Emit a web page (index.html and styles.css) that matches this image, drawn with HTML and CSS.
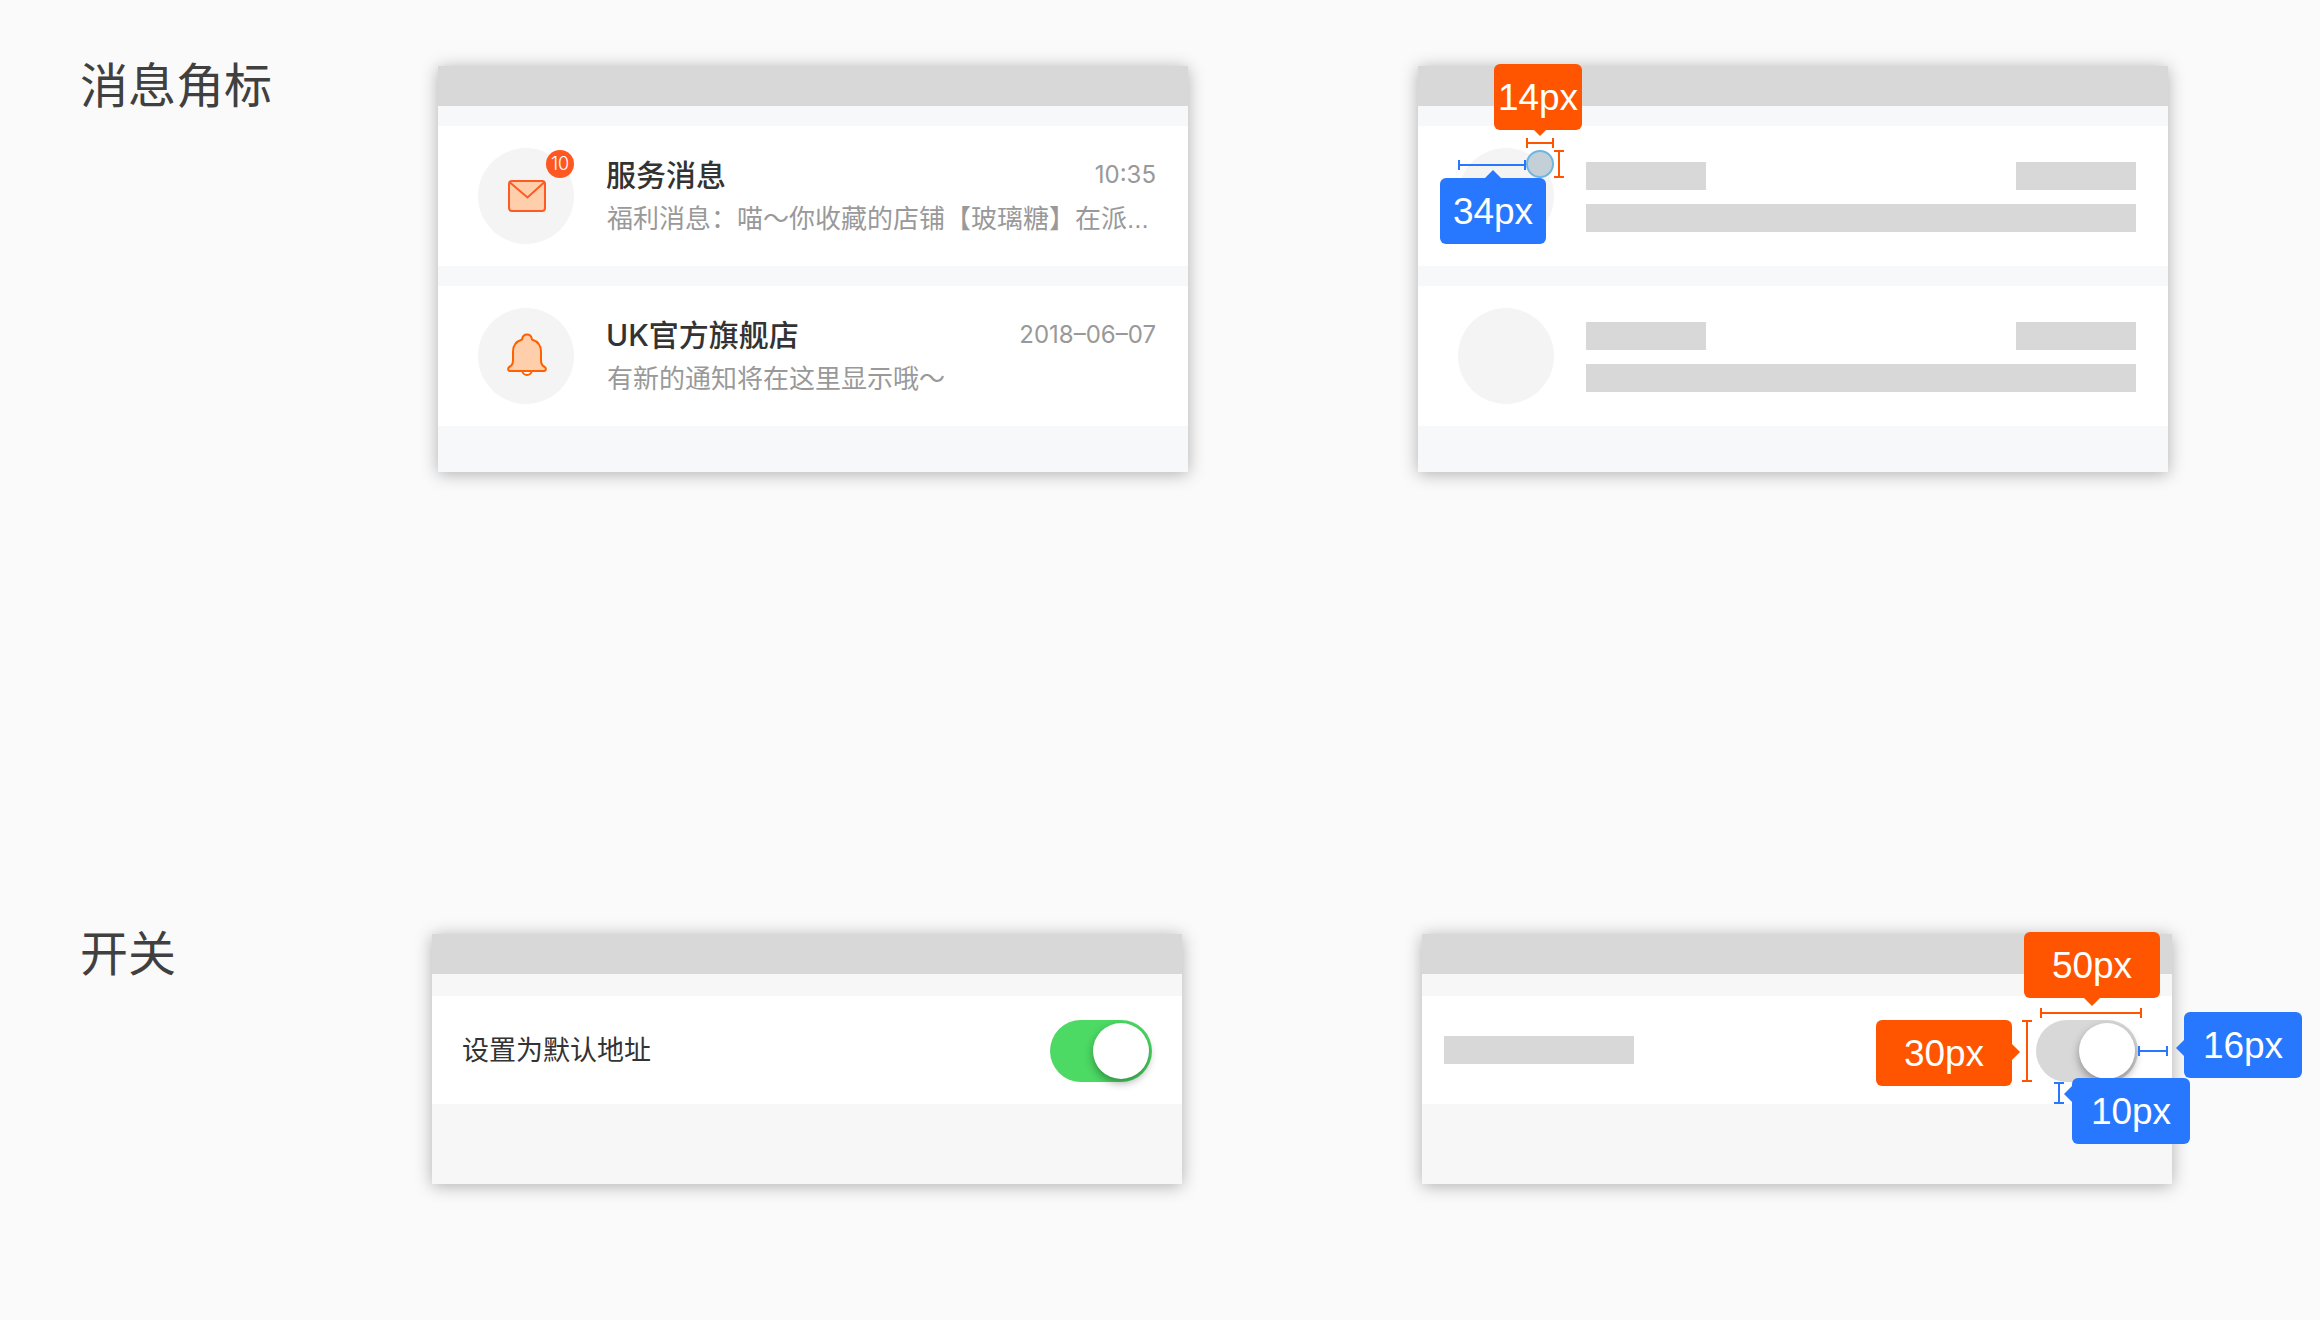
FILE: index.html
```html
<!DOCTYPE html>
<html lang="zh-CN">
<head>
<meta charset="utf-8">
<meta name="viewport" content="width=device-width, initial-scale=1">
<title>消息角标与开关</title>
<link rel="stylesheet" href="styles.css">
</head>
<body>
<main class="page">
  <section class="spec spec-badge">
    <h2 class="spec-title">消息角标</h2>
    <div class="panels">
      <div class="panel panel-messages">
        <div class="panel-bar"></div>
        <ul class="messages">
          <li class="message">
            <div class="avatar">
              <svg class="icon" viewBox="0 0 96 96" aria-hidden="true">
                <rect x="31" y="33" width="36" height="30" rx="3" fill="#ffceab" stroke="#ff5a22" stroke-width="2"/>
                <path d="M32 34.500 49.500 49.500 66 34.500" fill="none" stroke="#ff5a22" stroke-width="2"/>
              </svg>
              <span class="badge">10</span>
            </div>
            <div class="message-body">
              <h3 class="message-title">服务消息</h3>
              <time class="message-time">10:35</time>
              <p class="message-text">福利消息：喵～你收藏的店铺【玻璃糖】在派...</p>
            </div>
          </li>
          <li class="message">
            <div class="avatar">
              <svg class="icon" viewBox="0 0 96 96" aria-hidden="true">
                <path d="M44.500 63a4.500 4 0 0 0 9 0z" fill="#fff" stroke="#ff6000" stroke-width="2"/>
                <path d="M44 31.500C44.500 28 46.500 26.500 49 26.500S53.500 28 54 31.500C60 33.500 63 38 63 43.500V52C63 55.500 64 57.500 66 58.500 69 60 68 63 66 63H32C30 63 29 60 32 58.500 34 57.500 35 55.500 35 52V43.500C35 38 38 33.500 44 31.500Z" fill="#ffceab" stroke="#ff6000" stroke-width="2" stroke-linejoin="round"/>
              </svg>
            </div>
            <div class="message-body">
              <h3 class="message-title">UK官方旗舰店</h3>
              <time class="message-time">2018–06–07</time>
              <p class="message-text">有新的通知将在这里显示哦～</p>
            </div>
          </li>
        </ul>
      </div>
      <div class="panel panel-messages">
        <div class="panel-bar"></div>
        <ul class="messages">
          <li class="message">
            <div class="avatar">
              <span class="dot"></span>
              <span class="measure across orange dot-width"></span>
              <span class="measure down orange dot-height"></span>
              <span class="measure across blue dot-offset"></span>
              <span class="tag orange arrow-down tag-dot">14px</span>
              <span class="tag blue arrow-up tag-offset">34px</span>
            </div>
            <div class="message-body placeholder-body">
              <span class="block"></span>
              <span class="block"></span>
              <span class="block block-wide"></span>
            </div>
          </li>
          <li class="message">
            <div class="avatar"></div>
            <div class="message-body placeholder-body">
              <span class="block"></span>
              <span class="block"></span>
              <span class="block block-wide"></span>
            </div>
          </li>
        </ul>
      </div>
    </div>
  </section>

  <section class="spec spec-switch">
    <h2 class="spec-title">开关</h2>
    <div class="panels">
      <div class="panel panel-setting">
        <div class="panel-bar"></div>
        <div class="setting">
          <label class="setting-label" for="default-address">设置为默认地址</label>
          <input class="switch" type="checkbox" role="switch" id="default-address" checked>
        </div>
      </div>
      <div class="panel panel-setting">
        <div class="panel-bar"></div>
        <div class="setting setting-measured">
          <span class="block block-label"></span>
          <div class="switch-box">
            <input class="switch switch-plain" type="checkbox" role="switch" aria-label="开关" checked>
            <span class="measure across orange switch-width"></span>
            <span class="measure down orange switch-height"></span>
            <span class="measure across blue switch-right"></span>
            <span class="measure down blue switch-bottom"></span>
            <span class="tag orange arrow-down tag-width">50px</span>
            <span class="tag orange arrow-right tag-height">30px</span>
            <span class="tag blue arrow-left tag-right">16px</span>
            <span class="tag blue arrow-left tag-bottom">10px</span>
          </div>
        </div>
      </div>
    </div>
  </section>
</main>
</body>
</html>
```
FILE: styles.css
```css
* {
  box-sizing: border-box;
}

body {
  margin: 0;
  background: #fafafa;
  color: #333;
  font-family: "Liberation Sans", "Noto Sans CJK SC", sans-serif;
}

.page {
  padding: 66px 0 136px 80px;
}

/* Sections: a title on the left, two panels on the right */

.spec {
  display: flex;
  align-items: flex-start;
}

.spec-badge {
  padding-right: 152px;
  margin-bottom: 462px;
}

.spec-switch {
  padding-right: 148px;
}

.spec-title {
  flex: 0 0 358px;
  margin: 0;
  color: #404040;
  font-size: 48px;
  font-weight: 400;
  line-height: 42px;
}

.spec-switch .spec-title {
  flex-basis: 352px;
}

.panels {
  display: flex;
  flex: 1;
  gap: 230px;
}

.spec-switch .panels {
  gap: 240px;
}

.panel {
  flex: 1;
  min-width: 0;
  background: #f7f7f7;
  box-shadow: 0 2px 16px rgba(0, 0, 0, 0.3);
}

.panel-bar {
  height: 40px;
  background: #d8d8d8;
}

.panel-messages {
  padding-bottom: 46px;
  background: #f7f8fa;
}

.panel-setting {
  padding-bottom: 80px;
}

/* Message list */

.messages {
  display: flex;
  flex-direction: column;
  gap: 20px;
  margin: 20px 0 0;
  padding: 0;
  list-style: none;
}

.message {
  display: flex;
  gap: 32px;
  padding: 22px 32px 22px 40px;
  background: #fff;
}

.avatar {
  position: relative;
  flex: none;
  width: 96px;
  height: 96px;
  border-radius: 50%;
  background: #f4f4f4;
}

.icon {
  display: block;
  width: 96px;
  height: 96px;
}

.badge,
.dot {
  position: absolute;
  top: 2px;
  right: 0;
  width: 28px;
  height: 28px;
  border-radius: 50%;
}

.badge {
  background: #ff5722;
  color: #fff;
  font-family: Inter, sans-serif;
  font-size: 18px;
  font-weight: 300;
  line-height: 28px;
  text-align: center;
}

.dot {
  border: 2px solid #6fb6e2;
  background: #c3d0d7;
}

.message-body {
  display: grid;
  flex: 1;
  grid-template-columns: 1fr auto;
  grid-template-rows: 44px 42px;
  align-content: start;
  padding-top: 6px;
  min-width: 0;
}

.message-title {
  margin: 0;
  font-family: Inter, "Noto Sans CJK SC", sans-serif;
  font-size: 30px;
  font-weight: 500;
  line-height: 42px;
}

.message-time {
  color: #999;
  font-family: Inter, sans-serif;
  font-size: 24px;
  font-weight: 400;
  line-height: 42px;
}

.message-text {
  grid-column: 1 / -1;
  margin: 0;
  padding-left: 1px;
  overflow: hidden;
  color: #999;
  font-size: 26px;
  line-height: 42px;
  white-space: nowrap;
}

.placeholder-body {
  grid-template-rows: 28px 28px;
  row-gap: 14px;
  padding-top: 14px;
}

.block {
  width: 120px;
  height: 28px;
  background: #d8d8d8;
}

.block-wide {
  grid-column: 1 / -1;
  width: auto;
}

.block-label {
  width: 190px;
  margin-bottom: 2px;
}

/* Setting row with a switch */

.setting {
  display: flex;
  align-items: center;
  justify-content: space-between;
  height: 108px;
  margin-top: 22px;
  padding: 2px 30px 0;
  background: #fff;
}

.setting-measured {
  padding: 2px 34px 0 22px;
}

.setting-label {
  font-size: 27px;
  line-height: 40px;
}

.switch {
  display: block;
  width: 102px;
  height: 62px;
  margin: 0;
  padding: 3px;
  border-radius: 31px;
  appearance: none;
  background: #4cd964;
}

.switch::before {
  display: block;
  width: 56px;
  height: 56px;
  border-radius: 50%;
  background: #fff;
  box-shadow: 0 4px 8px rgba(0, 0, 0, 0.35);
  content: "";
}

.switch:checked::before {
  margin-left: auto;
}

.switch-plain {
  background: #d8d8d8;
}

.switch-box {
  position: relative;
}

/* Dimension lines */

.orange {
  --tone: #ff5500;
}

.blue {
  --tone: #2878ff;
}

.measure {
  position: absolute;
  border: 0 solid var(--tone);
  background: linear-gradient(var(--tone), var(--tone)) no-repeat;
}

.across {
  height: 10px;
  border-width: 0 2px;
  background-position: 0 4px;
  background-size: 100% 2px;
}

.down {
  width: 10px;
  border-width: 2px 0;
  background-position: 4px 0;
  background-size: 2px 100%;
}

.dot-width {
  top: -10px;
  left: 68px;
  width: 28px;
}

.dot-height {
  top: 2px;
  left: 96px;
  height: 28px;
}

.dot-offset {
  top: 12px;
  left: 0;
  width: 68px;
}

.switch-width {
  top: -12px;
  left: 4px;
  width: 102px;
}

.switch-height {
  top: 0;
  left: -14px;
  height: 62px;
}

.switch-right {
  top: 26px;
  left: 102px;
  width: 30px;
}

.switch-bottom {
  top: 62px;
  left: 18px;
  height: 22px;
}

/* Dimension labels */

.tag {
  position: absolute;
  height: 66px;
  border-radius: 6px;
  background: var(--tone);
  color: #fff;
  font-size: 37px;
  line-height: 68px;
  text-align: center;
}

.tag::after {
  position: absolute;
  border: 8px solid transparent;
  content: "";
}

.arrow-down::after {
  top: 100%;
  left: calc(50% - 8px);
  border-top-color: var(--tone);
  border-bottom-width: 0;
}

.arrow-up::after {
  bottom: 100%;
  left: calc(50% - 8px);
  border-bottom-color: var(--tone);
  border-top-width: 0;
}

.arrow-right::after {
  top: 24px;
  left: 100%;
  border-left-color: var(--tone);
  border-right-width: 0;
}

.arrow-left::after {
  top: 28px;
  right: 100%;
  border-right-color: var(--tone);
  border-left-width: 0;
}

.tag-dot {
  top: -84px;
  left: 36px;
  width: 88px;
}

.tag-dot::after {
  left: 40px;
  border-width: 6px 6px 0;
}

.tag-offset {
  top: 30px;
  left: -18px;
  width: 106px;
}

.tag-width {
  top: -88px;
  left: -12px;
  width: 136px;
}

.tag-height {
  top: 0;
  left: -160px;
  width: 136px;
}

.tag-right {
  top: -8px;
  left: 148px;
  width: 118px;
}

.tag-bottom {
  top: 58px;
  left: 36px;
  width: 118px;
}

.tag-bottom::after {
  top: 8px;
}
```
